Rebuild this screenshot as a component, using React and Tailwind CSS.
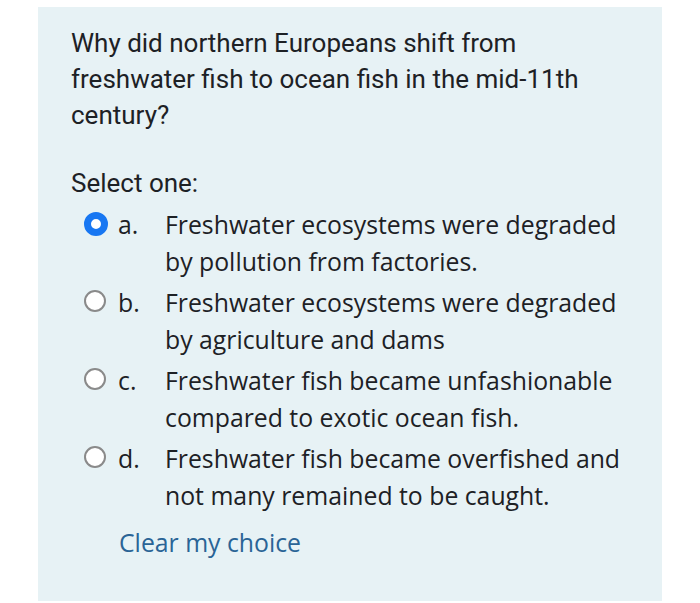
const OPTIONS = [
  { key: "a", text: "Freshwater ecosystems were degraded by pollution from factories.", checked: true },
  { key: "b", text: "Freshwater ecosystems were degraded by agriculture and dams" },
  { key: "c", text: "Freshwater fish became unfashionable compared to exotic ocean fish." },
  { key: "d", text: "Freshwater fish became overfished and not many remained to be caught." },
];

function Radio({ checked }) {
  if (checked) {
    return <span className="block w-[24px] h-[24px] rounded-full border-[7px] border-[#1877f2] bg-white" />;
  }
  return <span className="block w-[22px] h-[22px] rounded-full border-[2px] border-[#8a8a8a] bg-white" />;
}

export default function App() {
  return (
    <div className="w-[700px] h-[603px] bg-white pt-[7px] pl-[38px]">
      <div className="w-[624px] h-[594px] bg-[#e7f2f5] pl-[33px] pt-[18px]">
        <p className="font-['Roboto',sans-serif] text-[26px] leading-[36px] text-[#1d2125] w-[530px]">
          Why did northern Europeans shift from freshwater fish to ocean fish in the mid-11th century?
        </p>
        <p className="font-['Roboto',sans-serif] text-[26px] leading-[36px] text-[#1d2125] mt-[32px]">Select one:</p>
        <div className="mt-[3px] flex flex-col">
          {OPTIONS.map((o) => (
            <div key={o.key} className="flex items-start py-[2px]">
              <div className="w-[47px] pl-[13px] pt-[6px]">
                <Radio checked={o.checked} />
              </div>
              <span className="w-[47px] font-['Open_Sans',sans-serif] text-[24.8px] leading-[37px] text-[#1d2125]">
                {o.key}.
              </span>
              <span className="w-[470px] font-['Open_Sans',sans-serif] text-[24.8px] leading-[37px] text-[#1d2125]">
                {o.text}
              </span>
            </div>
          ))}
        </div>
        <a className="block ml-[48px] mt-[8px] font-['Open_Sans',sans-serif] text-[24.8px] leading-[37px] text-[#2a6496]">
          Clear my choice
        </a>
      </div>
    </div>
  );
}
